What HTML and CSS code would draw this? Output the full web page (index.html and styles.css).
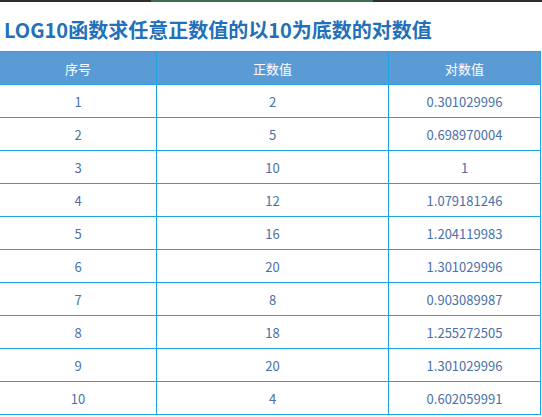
FILE: index.html
```html
<!DOCTYPE html>
<html lang="zh">
<head>
<meta charset="utf-8">
<link rel="stylesheet" href="styles.css">
</head>
<body>
<div class="topbar"><div class="seg dark1"></div><div class="seg green"></div><div class="seg dark2"></div></div>
<h1 class="title">LOG10函数求任意正数值的以10为底数的对数值</h1>
<table class="grid">
<thead><tr><th class="c1">序号</th><th class="c2">正数值</th><th class="c3">对数值</th></tr></thead>
<tbody>
<tr><td>1</td><td>2</td><td>0.301029996</td></tr>
<tr><td>2</td><td>5</td><td>0.698970004</td></tr>
<tr><td>3</td><td>10</td><td>1</td></tr>
<tr><td>4</td><td>12</td><td>1.079181246</td></tr>
<tr><td>5</td><td>16</td><td>1.204119983</td></tr>
<tr><td>6</td><td>20</td><td>1.301029996</td></tr>
<tr><td>7</td><td>8</td><td>0.903089987</td></tr>
<tr><td>8</td><td>18</td><td>1.255272505</td></tr>
<tr><td>9</td><td>20</td><td>1.301029996</td></tr>
<tr><td>10</td><td>4</td><td>0.602059991</td></tr>
</tbody>
</table>
</body>
</html>
```
FILE: styles.css
```css
html, body { margin: 0; padding: 0; background: #fff; }
body { font-family: "Noto Sans CJK SC", "Noto Sans", sans-serif; width: 542px; height: 417px; overflow: hidden; }
.topbar { display: flex; height: 2px; }
.seg { height: 2px; }
.dark1 { width: 151px; background: #2e2e2e; }
.green { width: 222px; background: #3f6e4c; }
.dark2 { flex: 1; background: #2e2e2e; }
.title { margin: 0; padding: 15px 0 0 4px; height: 34px; font-size: 20px; line-height: 26px; font-weight: bold; color: #2270b9; letter-spacing: 0; white-space: nowrap; }
.grid { border-collapse: collapse; width: 541px; table-layout: fixed; margin-top: 0; }
.grid th, .grid td { border: 1px solid #1ea4e2; height: 32px; padding: 0; text-align: center; vertical-align: middle; font-size: 13px; }
.grid th { background: #5b9bd5; color: #fff; font-weight: normal; }
.grid td { color: #4a70a8; }
.grid tr > :first-child { border-left: none; }
.c1 { width: 156px; }
.c2 { width: 231px; }
.c3 { width: auto; }
```
